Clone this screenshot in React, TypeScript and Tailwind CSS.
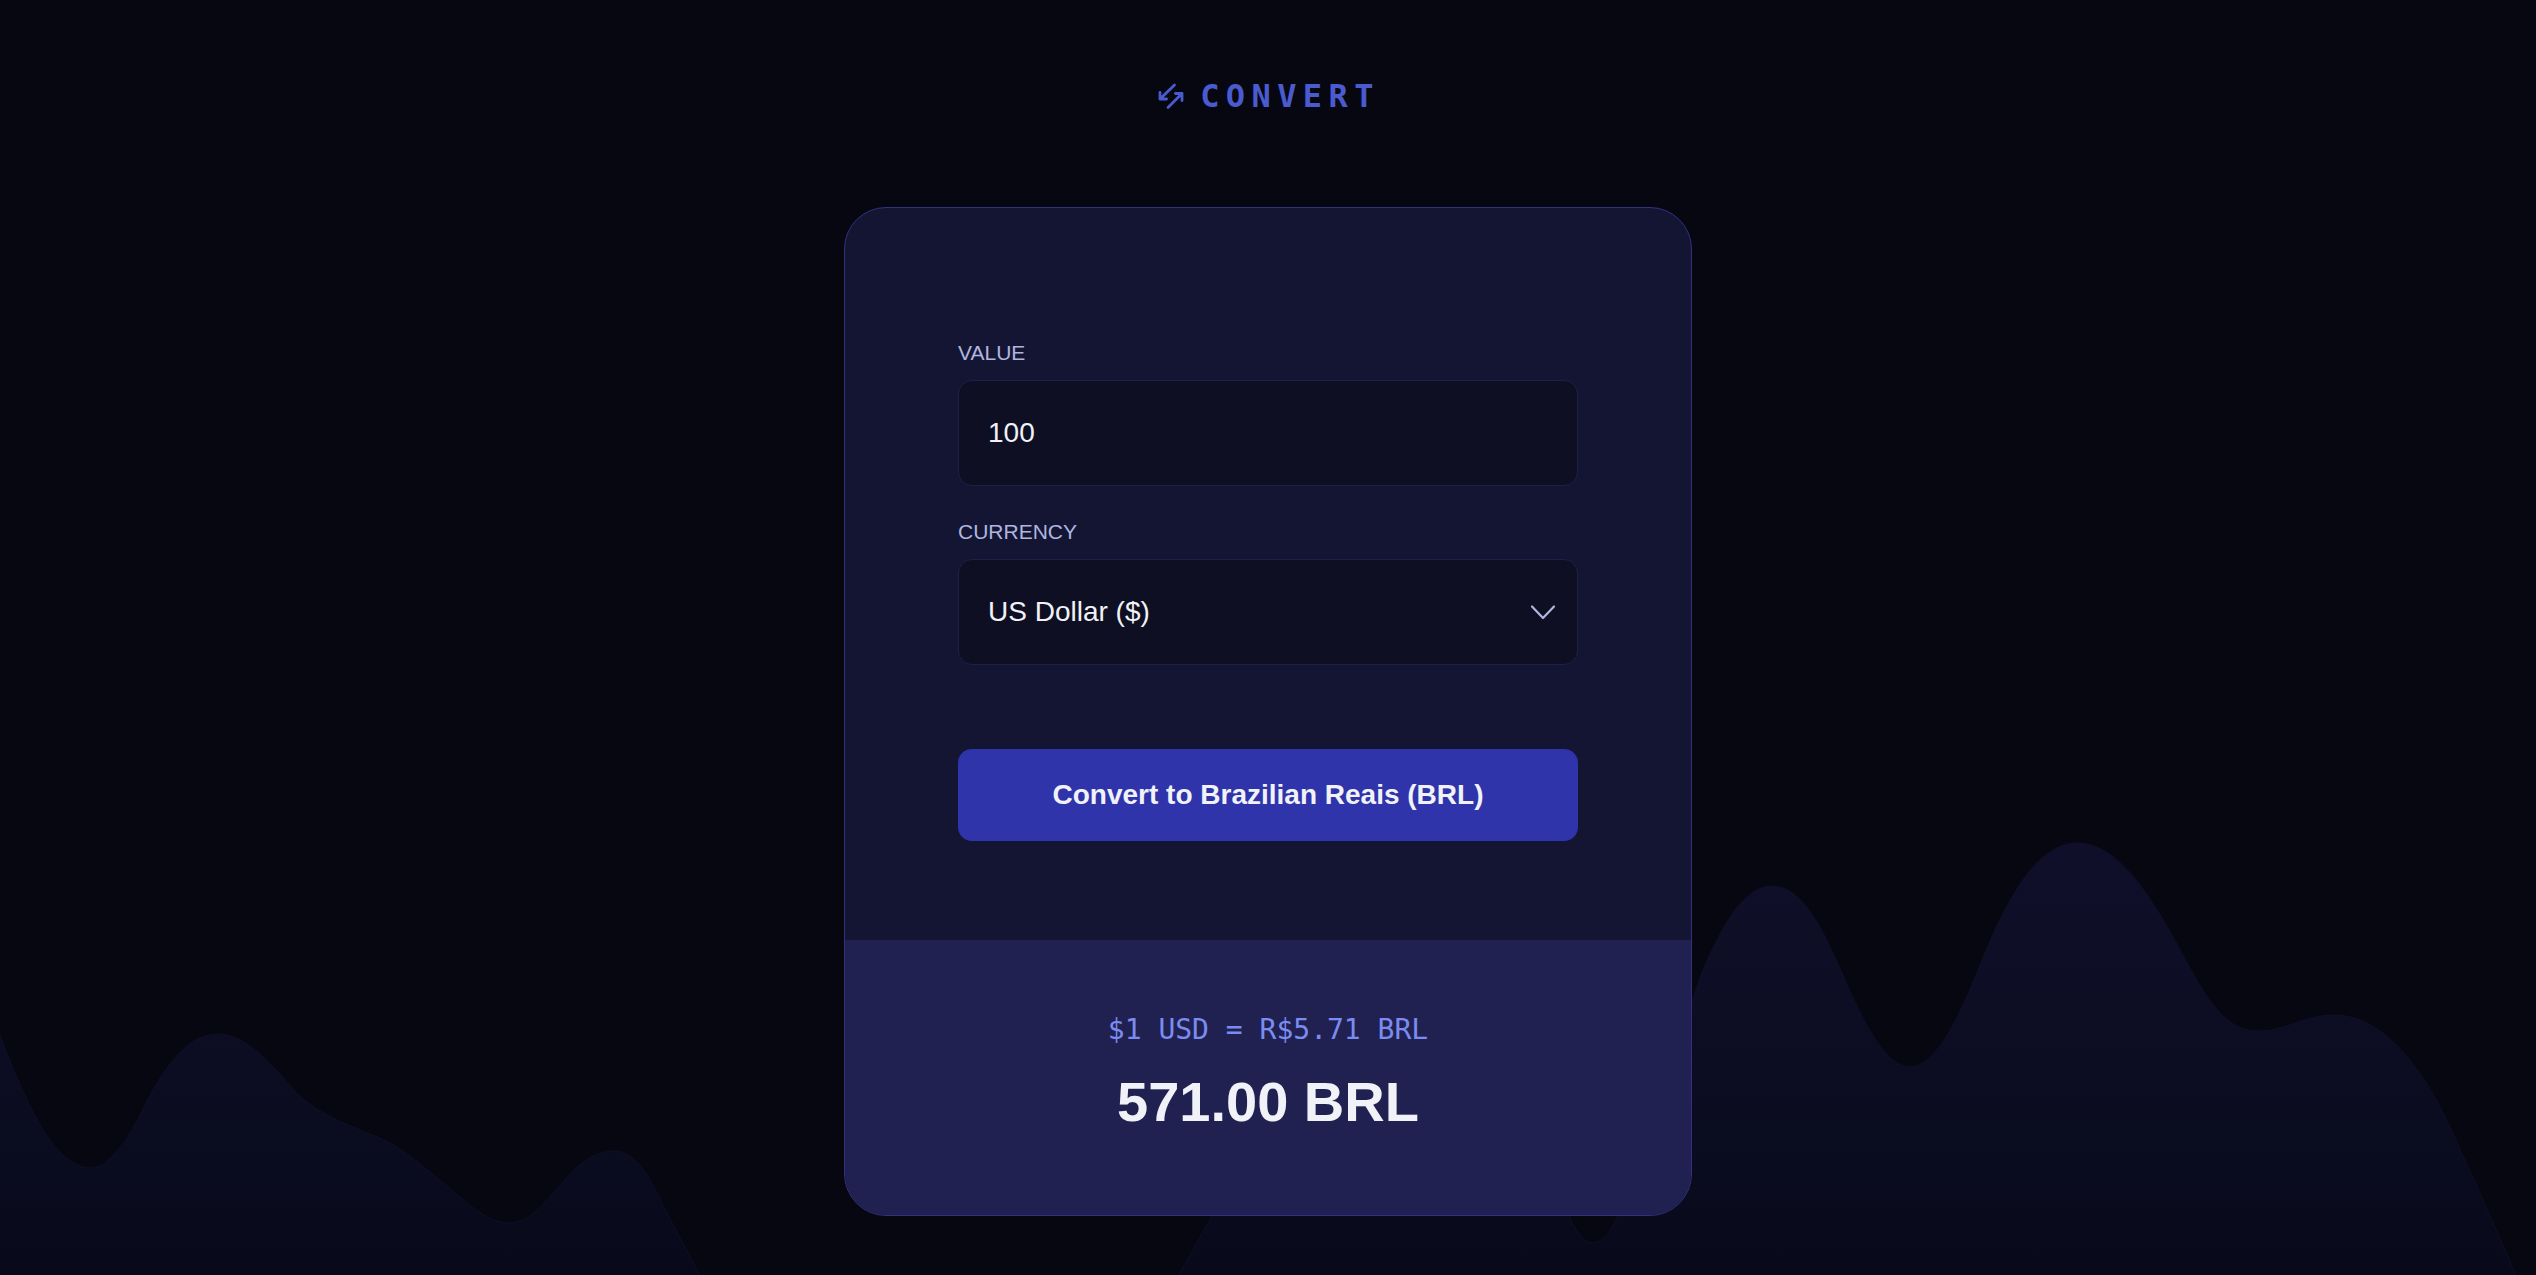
import { useState } from "react";

const rates: Record<string, { symbol: string; value: number; label: string }> = {
  USD: { symbol: "$", value: 5.71, label: "US Dollar ($)" },
  EUR: { symbol: "€", value: 6.18, label: "Euro (€)" },
  GBP: { symbol: "£", value: 7.38, label: "British Pound (£)" },
};

function Waves() {
  return (
    <svg
      className="pointer-events-none absolute inset-x-0 bottom-0 w-full"
      viewBox="0 0 2536 435"
      fill="none"
      aria-hidden="true"
    >
      <defs>
        <linearGradient id="wave" x1="0" y1="0" x2="0" y2="435" gradientUnits="userSpaceOnUse">
          <stop stopColor="#100f2b" />
          <stop offset="0.5" stopColor="#0c0d22" />
          <stop offset="1" stopColor="#080a1b" />
        </linearGradient>
      </defs>
      <g fill="url(#wave)" stroke="#0f0f26">
        <path d="M-2 190C12 228 25 257 39 283C56 313 74 328 90 328C108 328 127 303 145 265C167 222 190 194 218 194C244 194 268 220 291 247C306 264 323 273 339 281C355 289 372 294 388 302C405 311 420 324 436 337C462 358 485 383 509 383C530 383 546 362 562 343C580 322 595 311 615 311C633 311 647 332 659 357C674 388 688 412 702 440L-2 440Z" />
        <path d="M1176 440L1212 376C1280 230 1340 190 1400 190C1480 190 1540 310 1569 376C1577 394 1585 403 1593 403C1601 403 1610 394 1618 376C1650 305 1675 229 1692 162C1700 136 1707 119 1716 102C1734 65 1753 46 1772 46C1801 46 1821 85 1842 133C1866 190 1888 227 1910 227C1934 227 1957 183 1978 130C2007 58 2036 3 2078 3C2122 3 2158 68 2191 130C2215 174 2233 191 2259 191C2287 191 2303 175 2334 175C2392 175 2434 248 2459 307C2480 352 2499 397 2518 440Z" />
      </g>
    </svg>
  );
}

export default function App() {
  const [amount, setAmount] = useState("100");
  const [currency, setCurrency] = useState("USD");
  const rate = rates[currency];
  const total = (Number(amount) * rate.value).toFixed(2);

  return (
    <div className="relative flex min-h-screen flex-col items-center bg-[#070712] px-6 pt-18 pb-14 font-['Liberation_Sans',Arial,sans-serif] text-[#f0f2f8]">
      <Waves />
      <header className="relative flex h-12 items-center gap-4 text-[#4a5bcf]">
        <svg className="size-7" viewBox="0 0 28 28" fill="none" stroke="currentColor" strokeWidth="2.8" aria-hidden="true">
          <path
            d="M18.500 3L4 17M4 10.500V17H10.500M12 25.500L26 11.500M19.500 11.500H26V18.500"
            strokeLinecap="round"
            strokeLinejoin="round"
          />
        </svg>
        <h1 className="font-['DejaVu_Sans_Mono',monospace] text-[32px] leading-12 font-bold tracking-[0.2em]">CONVERT</h1>
      </header>

      <main className="relative mt-[87px] w-full max-w-[848px] overflow-hidden rounded-[42px] border border-[#2f3280] bg-[#141533]">
        <form
          className="flex flex-col px-[113px] pt-[131px] pb-[99px]"
          onSubmit={(e) => e.preventDefault()}
        >
          <label htmlFor="amount" className="text-[21px] leading-7 text-[#afb6e0] uppercase">
            Value
          </label>
          <input
            id="amount"
            inputMode="decimal"
            value={amount}
            onChange={(e) => setAmount(e.target.value)}
            className="mt-[13px] h-[106px] w-full rounded-[14px] border border-[#1e1f4b] bg-[#0e0f22] px-[29px] text-[28px] outline-none"
          />
          <label htmlFor="currency" className="mt-8 text-[21px] leading-7 text-[#afb6e0] uppercase">
            Currency
          </label>
          <div className="relative mt-[13px]">
            <select
              id="currency"
              value={currency}
              onChange={(e) => setCurrency(e.target.value)}
              className="h-[106px] w-full appearance-none rounded-[14px] border border-[#1e1f4b] bg-[#0e0f22] px-[29px] text-[28px] outline-none"
            >
              {Object.entries(rates).map(([code, item]) => (
                <option key={code} value={code}>
                  {item.label}
                </option>
              ))}
            </select>
            <svg
              className="pointer-events-none absolute top-1/2 right-[21px] h-4 w-7 -translate-y-1/2"
              viewBox="0 0 28 16"
              fill="none"
              stroke="#afb6e0"
              strokeWidth="2.2"
              strokeLinecap="round"
              strokeLinejoin="round"
              aria-hidden="true"
            >
              <path d="M3 2.500L14 14L25 2.500" />
            </svg>
          </div>
          <button
            type="submit"
            className="mt-[84px] h-[92px] rounded-[14px] bg-[#2f34aa] text-[28px] font-bold"
          >
            Convert to Brazilian Reais (BRL)
          </button>
        </form>

        <section className="flex flex-col items-center bg-[#202150] pt-[70px] pb-20" aria-live="polite">
          <p className="font-['DejaVu_Sans_Mono',monospace] text-[28px] leading-10 text-[#7b8cf0]">
            {rate.symbol}1 {currency} = R${rate.value} BRL
          </p>
          <p className="mt-[18px] text-[56px] leading-[67px] font-bold">{total} BRL</p>
        </section>
      </main>
    </div>
  );
}
